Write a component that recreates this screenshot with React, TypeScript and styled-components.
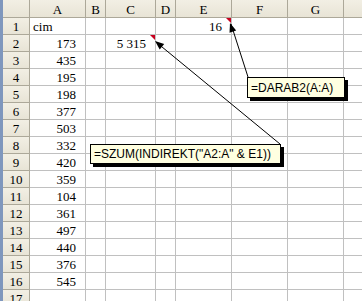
import React from "react";
import styled, { createGlobalStyle } from "styled-components";

const Global = createGlobalStyle`
  html, body { margin: 0; padding: 0; background: #fff; overflow: hidden; }
`;

const Page = styled.div`
  position: relative;
  width: 362px;
  height: 301px;
  overflow: hidden;
  background: #fff;
  display: flex;
  flex-direction: column;
`;

const TopStrip = styled.div`
  display: flex;
  height: 5px;
  border-bottom: 0;
`;

const StripSeg = styled.div<{ $w?: number; $c: string }>`
  ${(p) => (p.$w ? `width: ${p.$w}px;` : "flex: 1;")}
  background: ${(p) => p.$c};
`;

const Sheet = styled.div`
  display: grid;
  grid-template-columns: 27px 56px 20px 50px 20px 56px 56px 56px 56px;
  grid-auto-rows: 17px;
  grid-template-rows: 18px;
  border-left: 3px solid #7f97bd;
  font-family: "Liberation Serif", "Times New Roman", serif;
  font-size: 13px;
  color: #000;
`;

const Cell = styled.div<{ $align?: "left" | "right" | "center" }>`
  position: relative;
  box-sizing: border-box;
  border-right: 1px solid #c0c0c0;
  border-bottom: 1px solid #c0c0c0;
  background: #fff;
  display: flex;
  align-items: center;
  justify-content: ${(p) =>
    p.$align === "right" ? "flex-end" : p.$align === "center" ? "center" : "flex-start"};
  padding: ${(p) => (p.$align === "right" ? "0 9px 0 0" : p.$align === "left" ? "0 0 0 3px" : "0")};
  white-space: nowrap;
  line-height: 1;
`;

const HeadCell = styled.div`
  box-sizing: border-box;
  border-right: 1px solid #aca899;
  border-bottom: 1px solid #aca899;
  background: linear-gradient(#f2efe4, #e8e4d6);
  display: flex;
  align-items: center;
  justify-content: center;
  line-height: 1;
  padding-top: 1px;
`;

const Marker = styled.span`
  position: absolute;
  top: 0;
  right: 0;
  width: 0;
  height: 0;
  border-top: 5px solid #c8001e;
  border-left: 5px solid transparent;
`;

const Comment = styled.div<{ $x: number; $y: number; $w: number; $h: number }>`
  position: absolute;
  left: ${(p) => p.$x}px;
  top: ${(p) => p.$y}px;
  width: ${(p) => p.$w}px;
  height: ${(p) => p.$h}px;
  box-sizing: border-box;
  border: 1px solid #000;
  background: #ffffe1;
  box-shadow: 3px 3px 0 #000;
  font-family: "Liberation Sans", Arial, sans-serif;
  font-size: 12px;
  display: flex;
  align-items: center;
  padding-left: 3px;
  white-space: nowrap;
  color: #000;
`;

const Overlay = styled.svg`
  position: absolute;
  left: 0;
  top: 0;
  pointer-events: none;
`;

const letters = ["A", "B", "C", "D", "E", "F", "G", ""];
const values = [173, 435, 195, 198, 377, 503, 332, 420, 359, 104, 361, 497, 440, 376, 545];

function arrowHead(tx: number, ty: number, fx: number, fy: number) {
  const dx = fx - tx;
  const dy = fy - ty;
  const len = Math.hypot(dx, dy);
  const ux = dx / len;
  const uy = dy / len;
  const L = 9;
  const W = 3.5;
  const bx = tx + ux * L;
  const by = ty + uy * L;
  return `${tx},${ty} ${bx - uy * W},${by + ux * W} ${bx + uy * W},${by - ux * W}`;
}

export default function App() {
  const rows: React.ReactNode[] = [];
  for (let r = 1; r <= 17; r++) {
    rows.push(<HeadCell key={`h${r}`}>{r}</HeadCell>);
    for (let c = 0; c < 8; c++) {
      let content: React.ReactNode = null;
      let align: "left" | "right" = "right";
      let marker = false;
      if (c === 0 && r === 1) {
        content = "cim";
        align = "left";
      } else if (c === 0 && r >= 2) {
        content = values[r - 2];
      } else if (c === 2 && r === 2) {
        content = "5 315";
        marker = true;
      } else if (c === 4 && r === 1) {
        content = "16";
        marker = true;
      }
      rows.push(
        <Cell key={`c${r}-${c}`} $align={align}>
          {content}
          {marker && <Marker />}
        </Cell>
      );
    }
  }

  return (
    <>
      <Global />
      <Page>
        <TopStrip>
          <StripSeg $w={125} $c="#7d9fd9" />
          <StripSeg $w={20} $c="#b6cbef" />
          <StripSeg $w={50} $c="#7d9fd9" />
          <StripSeg $c="#d8d4c8" />
        </TopStrip>
        <Sheet>
          <HeadCell />
          {letters.map((l, i) => (
            <HeadCell key={i}>{l}</HeadCell>
          ))}
          {rows}
        </Sheet>
        <Overlay width={362} height={301}>
          <line x1={248} y1={77} x2={231} y2={24} stroke="#000" strokeWidth={1} />
          <polygon points={arrowHead(230, 23, 248, 77)} fill="#000" />
          <line x1={280} y1={144} x2={156} y2={42} stroke="#000" strokeWidth={1} />
          <polygon points={arrowHead(155, 41, 280, 144)} fill="#000" />
        </Overlay>
        <Comment $x={247} $y={77} $w={98} $h={21}>
          =DARAB2(A:A)
        </Comment>
        <Comment $x={90} $y={144} $w={191} $h={20}>
          =SZUM(INDIREKT("A2:A" &amp; E1))
        </Comment>
      </Page>
    </>
  );
}
